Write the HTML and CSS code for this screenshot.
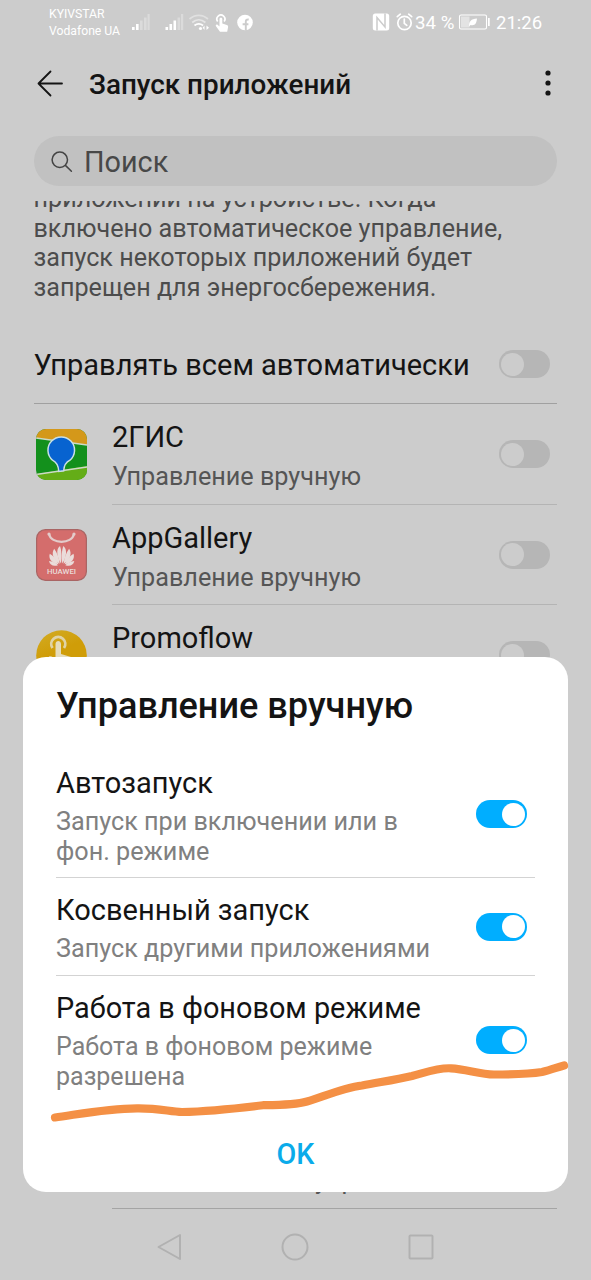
FILE: index.html
```html
<!DOCTYPE html>
<html lang="ru">
<head>
<meta charset="utf-8">
<title>Запуск приложений</title>
<link rel="stylesheet" href="styles.css">
</head>
<body>
<div class="screen">
  <header class="status">
    <div class="carriers"><span>KYIVSTAR</span><span>Vodafone UA</span></div>
    <svg class="status-left" width="124" height="20" viewBox="0 0 124 20">
      <g fill="#fff">
        <rect x="1" y="14" width="2.6" height="3"/><rect x="5" y="11" width="2.6" height="6"/>
        <rect x="34.500" y="14" width="2.600" height="3"/><rect x="38.500" y="11" width="2.600" height="6"/><rect x="42.500" y="7.500" width="2.600" height="9.500"/>
        <g opacity=".3"><rect x="9" y="7.500" width="2.600" height="9.500"/><rect x="13" y="4.500" width="2.600" height="12.500"/><rect x="16.500" y="1" width="2.200" height="16"/><rect x="46.500" y="4.500" width="2.600" height="12.500"/><rect x="50" y="1" width="2.200" height="16"/></g>
        <circle cx="69.500" cy="15.500" r="1.600"/><path d="M73.500 12.500v4.500l-1.800-2.200zM75.500 12.500v4.500l2.500-2.200z"/>
        <path d="M89 18.800l-4-5.500c-.8-1.500.6-2.300 1.800-1.300l1.700 1.400V6.200c0-1.900 2.800-1.900 2.800 0v4.300l4.500 1.400c1 .3 1.400 1 1.300 2l-.9 4.900z"/>
        <circle cx="114" cy="9.500" r="7.800"/>
      </g>
      <g fill="none" stroke="#fff" stroke-width="1.700">
        <path d="M58.500 6c5.500-4.800 13-4.800 18.500 0" opacity=".4"/><path d="M61.200 9.500c4-3.600 9.200-3.600 13.200 0" opacity=".5"/><path d="M63.500 12.500c2.600-2 6-2 8.600 0"/>
        <path d="M86.700 8.500a4 4 0 1 1 6.400 0"/>
      </g>
      <path d="M114.800 17.500v-6.300h2.600M111.600 11.200h3.200M114.800 11.200V8.500q0-2.300 2.900-2" fill="none" stroke="#ccc" stroke-width="1.900"/>
    </svg>
    <svg class="status-mid" width="42" height="20" viewBox="0 0 42 20">
      <rect x=".8" y="1.500" width="16.400" height="17" rx="2.500" fill="#fff"/>
      <path d="M5 18.500V5.500l8 9.500V1.500" fill="none" stroke="#ccc" stroke-width="1.500"/>
      <g fill="none" stroke="#fff" stroke-width="1.700" stroke-linecap="round"><circle cx="32.500" cy="11" r="6.700"/><path d="M32.300 7v4.300l2.500 2M25.300 4.700l3-2.500M39.700 4.700l-3-2.500"/></g>
    </svg>
    <span class="pct">34 %</span>
    <svg class="battery" width="32" height="18" viewBox="0 0 32 18">
      <rect x="1.500" y="2" width="27" height="14" rx="1.500" fill="none" stroke="#fff" stroke-width="1.100"/>
      <rect x="3" y="3.500" width="8.500" height="11" fill="#fff" opacity=".45"/>
      <path d="M11 13.500c0-5.500 2-7.500 8-8-.5 5-2 7.500-6.500 6.500z" fill="#fff"/>
      <rect x="30" y="5" width="1.700" height="8" fill="#fff"/>
    </svg>
    <span class="clock">21:26</span>
  </header>

  <div class="appbar">
    <svg width="28" height="28" viewBox="0 0 28 28" fill="none" stroke="#141414" stroke-width="1.800" stroke-linecap="round" stroke-linejoin="round"><path d="M14.500 2.500L2.500 14.500l12 12M2.500 14.500H26"/></svg>
    <h1>Запуск приложений</h1>
    <svg class="more" width="6" height="26" viewBox="0 0 6 26" fill="#141414"><circle cx="3" cy="3" r="2.600"/><circle cx="3" cy="13" r="2.600"/><circle cx="3" cy="23" r="2.600"/></svg>
  </div>

  <div class="search">
    <svg width="22" height="22" viewBox="0 0 22 22" fill="none" stroke="#444" stroke-width="1.500" stroke-linecap="round"><circle cx="8.800" cy="8.800" r="7.700"/><path d="M14.400 14.400l6 5.800"/></svg>
    <span>Поиск</span>
  </div>

  <main class="content">
    <p class="intro">приложений на устройстве. Когда<br>включено автоматическое управление,<br>запуск некоторых приложений будет<br>запрещен для энергосбережения.</p>
    <div class="all-row"><span class="name">Управлять всем автоматически</span><i class="toggle"></i></div>
    <div class="app-row">
      <svg class="app-icon" width="51" height="51" viewBox="0 0 51 51">
        <defs><clipPath id="gisClip"><rect width="51" height="51" rx="10"/></clipPath></defs>
        <g clip-path="url(#gisClip)">
          <rect width="51" height="51" fill="#13901c"/>
          <path d="M0 0h51v16L0 9z" fill="#d4981a"/><path d="M0 45l51-8v14H0z" fill="#64ad17"/>
          <path d="M0 9l51 7M0 45.500l51-7.500" stroke="#ccd9c8" stroke-width="1.500"/>
          <path d="M22.800 42.500c-.3-7-2.800-9.500-6.300-11.300A13.300 13.300 0 1 1 34 31.200c-3.700 1.800-6 4-6.300 10.600z" fill="#0763d0" stroke="#c9dfe5" stroke-width="1.500"/>
        </g>
      </svg>
      <div class="app-body"><div class="labels"><span class="name">2ГИС</span><span class="desc">Управление вручную</span></div><i class="toggle"></i></div>
    </div>
    <div class="app-row">
      <svg class="app-icon" width="51" height="52" viewBox="0 0 51 52">
        <rect x=".6" y=".6" width="49.800" height="50.800" rx="9" fill="#d46d6c" stroke="#a96564" stroke-width="1.200"/>
        <path d="M13 5c2 10.500 23 10.500 25 0" fill="none" stroke="#e3cccb" stroke-width="2.200" stroke-linecap="round"/>
        <circle cx="13" cy="5" r="1.600" fill="#e3cccb"/><circle cx="38" cy="5" r="1.600" fill="#e3cccb"/>
        <g fill="#eadcda">
          <path d="M25 34.500c-4-6-5.500-14-1-17.500 1.500 4 2 11 1 17.500z"/><path d="M26.300 34.500c4-6 5.500-14 1-17.500-1.500 4-2 11-1 17.500z"/>
          <path d="M23.700 34.800c-6-4-9-10-5.500-15 3 4 5 9.500 5.500 15z"/><path d="M27.600 34.800c6-4 9-10 5.500-15-3 4-5 9.500-5.500 15z"/>
          <path d="M22.600 35.300c-7-1.500-10.500-5.500-8.800-10.600 4 2.500 7 6 8.800 10.600z"/><path d="M28.700 35.300c7-1.500 10.500-5.500 8.800-10.600-4 2.500-7 6-8.800 10.600z"/>
          <path d="M22 36.200c-4.500 1.300-8 .3-9-4.200 3.500.2 7 1.800 9 4.200z"/><path d="M29.300 36.200c4.500 1.300 8 .3 9-4.200-3.500.2-7 1.800-9 4.200z"/>
        </g>
        <text class="brand" x="25.500" y="44.500" text-anchor="middle" textLength="29" lengthAdjust="spacingAndGlyphs">HUAWEI</text>
      </svg>
      <div class="app-body"><div class="labels"><span class="name">AppGallery</span><span class="desc">Управление вручную</span></div><i class="toggle"></i></div>
    </div>
    <div class="app-row">
      <svg class="app-icon" width="51" height="51" viewBox="0 0 51 51">
        <defs><linearGradient id="gold" x2=".4" y2="1"><stop offset="0" stop-color="#d2ac25"/><stop offset=".5" stop-color="#d09d08"/></linearGradient></defs>
        <circle cx="25.500" cy="25.500" r="25.300" fill="url(#gold)"/>
        <path d="M16.500 18a7 7 0 1 1 11.500 0" fill="none" stroke="#e0d3a6" stroke-width="2.800"/>
        <path d="M19.500 28V14c0-4 5.500-4 5.500 0v10l10 3v10H16l-4-9c1-3 5-2 7.500 2z" fill="#e5dcbc"/>
      </svg>
      <div class="app-body"><div class="labels"><span class="name">Promoflow</span></div><i class="toggle"></i></div>
    </div>
    <div class="app-row last">
      <div class="app-body"><div class="labels"><span class="desc">Автоматическое управление</span></div></div>
    </div>
  </main>

  <nav class="navbar">
    <svg width="26" height="28" viewBox="0 0 26 28"><path d="M24 2v24L2.500 14z"/></svg>
    <svg width="28" height="28" viewBox="0 0 28 28"><circle cx="14" cy="14" r="12.500"/></svg>
    <svg width="26" height="26" viewBox="0 0 26 26"><rect x="1.500" y="1.500" width="23" height="23" rx="1"/></svg>
  </nav>

  <section class="dialog">
    <h2>Управление вручную</h2>
    <div class="option tall"><div class="labels"><span class="name">Автозапуск</span><span class="desc">Запуск при включении или в<br>фон. режиме</span></div><i class="toggle on"></i></div>
    <div class="option"><div class="labels"><span class="name">Косвенный запуск</span><span class="desc">Запуск другими приложениями</span></div><i class="toggle on"></i></div>
    <div class="option tall final"><div class="labels"><span class="name">Работа в фоновом режиме</span><span class="desc">Работа в фоновом режиме<br>разрешена</span></div><i class="toggle on"></i></div>
    <button class="ok">OK</button>
  </section>

  <svg class="marker" width="591" height="80" viewBox="0 1050 591 80"><path d="M55 1117.500C75 1115 105 1108.500 137 1108.300C160 1108 170 1112 182 1112C205 1111.500 240 1108 263 1105.200C280 1105 295 1105 307 1101.500C325 1096 343 1088 362 1085.500C380 1082 395 1080 412 1076C427 1072 438 1067.500 451 1068.300C466 1069 480 1074.500 494 1074.500C512 1074.500 530 1074 542 1072C551 1070 558 1067 564 1065.500"/></svg>
</div>
</body>
</html>
```
FILE: styles.css
```css
* { box-sizing: border-box; }
body { margin: 0; font-family: Roboto, sans-serif; background: #ccc; color: #141414; }
.screen { position: relative; width: 591px; height: 1280px; overflow: hidden; display: flex; flex-direction: column; background: #ccc; }

.status { height: 44px; flex: none; display: flex; align-items: flex-start; padding: 0 40px 0 49px; color: #fff; }
.carriers { display: flex; flex-direction: column; width: 82px; padding-top: 6px; font-size: 12.2px; line-height: 17px; white-space: nowrap; }
.status-left { margin-top: 13px; }
.status-mid { margin: 12px 0 0 117px; }
.pct { width: 43px; font-size: 18.7px; line-height: 22px; margin: 12px 0 0 1px; white-space: nowrap; }
.battery { margin-top: 13px; }
.clock { font-size: 18.5px; line-height: 22px; margin: 12px 0 0 6px; }

.appbar { height: 92px; flex: none; display: flex; align-items: flex-start; padding: 25px 40px 0 36px; }
.appbar h1 { flex: 1; margin: 0 0 0 25px; font-size: 27.85px; font-weight: 500; line-height: 32px; white-space: nowrap; }
.more { margin-top: 1px; }

.search { height: 50px; flex: none; margin: 0 34px; border-radius: 25px; background: #c1c1c1; display: flex; align-items: center; gap: 11px; padding: 2px 0 0 17px; font-size: 28.8px; color: #484848; }

.content { flex: none; height: 1009px; margin: 15px 34px 0; overflow: hidden; }
.intro { margin: -17px 0 0 -.5px; font-size: 25.15px; line-height: 29.5px; color: #4c4c4c; white-space: nowrap; }
.all-row { height: 102px; padding-top: 23px; display: flex; align-items: center; justify-content: space-between; padding-right: 7.5px; border-bottom: 1px solid #a0a0a0; }
.all-row .name { padding-top: 1px; margin-left: -.5px; }
.name { font-size: 29px; line-height: 34px; white-space: nowrap; }
.desc { font-size: 25.2px; line-height: 29.5px; color: #555; white-space: nowrap; }
.labels { display: flex; flex-direction: column; }
.app-row { height: 100.6px; display: flex; align-items: center; padding-left: 2px; }
.app-icon { flex: none; margin-right: 25px; }
.app-body { flex: 1; height: 100%; display: flex; align-items: center; justify-content: space-between; padding-right: 7.5px; border-bottom: 1px solid #b4b4b4; }
.app-body .labels { height: 72px; gap: 8px; padding-top: 2.5px; }
.app-body .toggle { top: .5px; }
.last { margin-top: 402.4px; padding-left: 78px; }
.last .app-body { align-items: flex-end; padding-bottom: 12px; border-color: #a4a4a4; }
.last .labels { height: auto; padding: 0; }

.toggle { position: relative; flex: none; width: 51px; height: 28px; padding: 2.5px; border-radius: 14px; background: #b6b6b6; display: flex; }
.toggle::before { content: ""; width: 23px; height: 23px; border-radius: 50%; background: #ccc; }
.toggle.on { background: #00aeff; justify-content: flex-end; }
.toggle.on::before { background: #fff; }

.navbar { flex: 1; display: flex; align-items: center; justify-content: center; gap: 99px; padding: 4px 1px 0 0; }
.navbar svg { fill: none; stroke: #b1b1b1; stroke-width: 2; stroke-linejoin: round; }

.dialog { position: absolute; left: 22.5px; top: 657px; width: 545.5px; height: 535px; border-radius: 23px; background: #fff; padding: 28px 33px 0 33.5px; display: flex; flex-direction: column; }
.dialog h2 { margin: 0 0 24px; font-size: 36.1px; font-weight: 500; line-height: 42px; white-space: nowrap; }
.option { flex: none; height: 98px; display: flex; align-items: center; justify-content: space-between; padding: 0 8px 0 0; border-bottom: 1px solid #d3d3d3; }
.option.tall { height: 127px; }
.option.final { height: 128px; border-bottom: 0; }
.option .desc { color: #808080; }
.option .labels { gap: 7.5px; padding-top: 3.5px; }
.option.final .labels { padding-top: 1.5px; }
.option.final .name { font-size: 28.85px; }
.option.final .desc { font-size: 25px; }
.ok { align-self: center; margin-top: 29.5px; border: 0; padding: 0; background: none; color: #0aabea; font: 500 28.7px/40px Roboto, sans-serif; }
.brand { font: 500 6.5px Roboto, sans-serif; fill: #eadcda; }
.marker { position: absolute; left: 0; top: 1050px; fill: none; stroke: #f49045; stroke-width: 8.2; stroke-linecap: round; stroke-linejoin: round; }
```
